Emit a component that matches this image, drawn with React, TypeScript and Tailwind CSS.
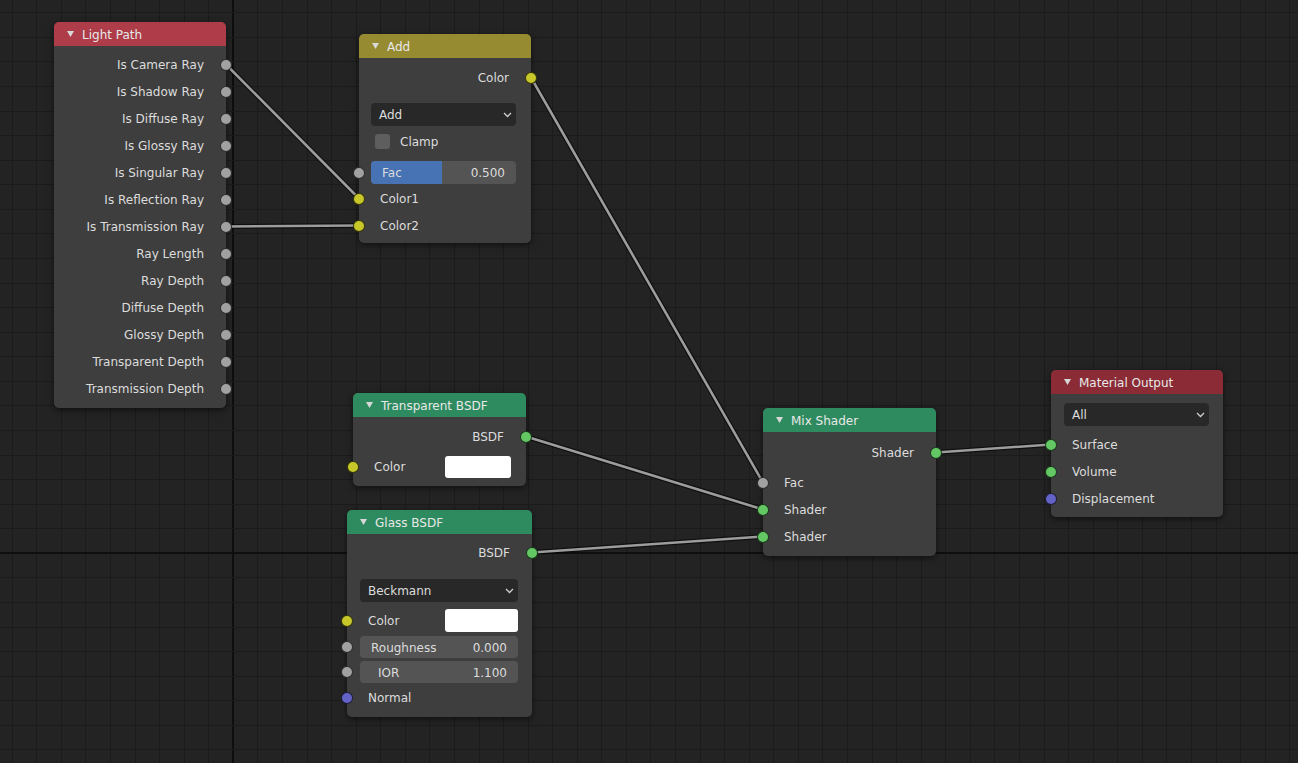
import React from "react";

const sock = {
  gray: "bg-[#a1a1a1]",
  yellow: "bg-[#c7c729]",
  green: "bg-[#63c763]",
  purple: "bg-[#6363c7]",
};
type S = keyof typeof sock;

function Socket({ c, side }: { c: S; side: "l" | "r" }) {
  return (
    <span
      className={`absolute top-1/2 -translate-y-1/2 w-[12px] h-[12px] rounded-full border border-black/70 ${sock[c]} ${
        side === "l" ? "-left-[6.5px]" : "-right-[6px]"
      }`}
    />
  );
}

function Node({ title, head, pos, children }: { title: string; head: string; pos: string; children: React.ReactNode }) {
  return (
    <div className={`absolute rounded-[5px] bg-[#3e3e3e] shadow-[0_2px_6px_rgba(0,0,0,0.55)] ${pos}`}>
      <div className={`h-[24px] rounded-t-[5px] flex items-center pl-[13px] gap-[8px] text-[#e8e8e8] ${head}`}>
        <svg width="7" height="6" viewBox="0 0 7 6">
          <polygon points="0,0 7,0 3.5,6" fill="#d8d8d8" />
        </svg>
        <span className="leading-none pt-[1px]">{title}</span>
      </div>
      {children}
    </div>
  );
}

function Out({ label, c }: { label: string; c: S }) {
  return (
    <div className="relative h-[27px] flex items-center justify-end pr-[22px] pt-[1px] leading-none">
      {label}
      <Socket c={c} side="r" />
    </div>
  );
}

function In({ label, c, cls = "" }: { label: string; c: S; cls?: string }) {
  return (
    <div className={`relative h-[27px] flex items-center pl-[21px] pt-[1px] leading-none ${cls}`}>
      {label}
      <Socket c={c} side="l" />
    </div>
  );
}

function Chevron() {
  return (
    <svg width="9" height="6" viewBox="0 0 9 6" className="mr-[4px]">
      <polyline points="1,1 4.5,4.5 8,1" fill="none" stroke="#cfcfcf" strokeWidth="1.3" />
    </svg>
  );
}

function Dropdown({ label, cls }: { label: string; cls: string }) {
  return (
    <div className={`h-[23px] rounded-[4px] bg-[#282828] flex items-center justify-between pl-[8px] leading-none ${cls}`}>
      <span className="pt-[1px]">{label}</span>
      <Chevron />
    </div>
  );
}

function Slider({ label, value, cls = "", lp = "pl-[11px]" }: { label: string; value: string; cls?: string; lp?: string }) {
  return (
    <div className={`relative h-[22px] ${cls}`}>
      <Socket c="gray" side="l" />
      <div className={`ml-[13px] mr-[14px] h-full rounded-[4px] bg-[#545454] flex items-center justify-between ${lp} pr-[11px] pt-[1px] leading-none`}>
        <span>{label}</span>
        <span>{value}</span>
      </div>
    </div>
  );
}

const lightPathOuts = [
  "Is Camera Ray",
  "Is Shadow Ray",
  "Is Diffuse Ray",
  "Is Glossy Ray",
  "Is Singular Ray",
  "Is Reflection Ray",
  "Is Transmission Ray",
  "Ray Length",
  "Ray Depth",
  "Diffuse Depth",
  "Glossy Depth",
  "Transparent Depth",
  "Transmission Depth",
];

const wires: [number, number, number, number][] = [
  [226, 64.5, 359, 198.5],
  [226, 226.5, 359, 225.5],
  [531, 77.5, 763, 482.5],
  [526, 436.5, 763, 509.5],
  [532, 552.5, 763, 536.5],
  [936, 452.5, 1051, 444.5],
];

function Canvas() {
  const step = 24.57;
  const xs = Array.from({ length: 56 }, (_, i) => 233.3 + (i - 10) * step);
  const ys = Array.from({ length: 34 }, (_, i) => 553.3 + (i - 23) * step);
  return (
    <svg className="absolute inset-0" width="1298" height="763">
      {xs.map((x, i) => (
        <line key={"x" + i} x1={x} y1={0} x2={x} y2={763} stroke={i === 10 ? "#0e0e0e" : "#1b1b1b"} strokeWidth={i === 10 ? 2 : 1} shapeRendering="crispEdges" />
      ))}
      {ys.map((y, i) => (
        <line key={"y" + i} x1={0} y1={y} x2={1298} y2={y} stroke={i === 23 ? "#0e0e0e" : "#1b1b1b"} strokeWidth={i === 23 ? 2 : 1} shapeRendering="crispEdges" />
      ))}
      {wires.map(([a, b, c, d], i) => (
        <g key={"w" + i}>
          <line x1={a} y1={b} x2={c} y2={d} stroke="rgba(0,0,0,0.55)" strokeWidth={5} strokeLinecap="round" />
          <line x1={a} y1={b} x2={c} y2={d} stroke="#9c9c9c" strokeWidth={2.6} strokeLinecap="round" />
        </g>
      ))}
    </svg>
  );
}

export default function App() {
  return (
    <div className="relative w-[1298px] h-[763px] overflow-hidden bg-[#232323] font-['DejaVu_Sans',sans-serif] text-[12px] text-[#dcdcdc]">
      <Canvas />

      {/* Light Path */}
      <Node title="Light Path" head="bg-[#ae3d49]" pos="left-[54px] top-[22px] w-[172px]">
        <div className="pt-[5px] pb-[6px]">
          {lightPathOuts.map(l => (
            <Out key={l} label={l} c="gray" />
          ))}
        </div>
      </Node>

      {/* Add */}
      <Node title="Add" head="bg-[#978b32]" pos="left-[359px] top-[34px] w-[172px]">
        <div className="pt-[6px] pb-[4px]">
          <Out label="Color" c="yellow" />
          <Dropdown label="Add" cls="mt-[12px] ml-[12px] mr-[15px]" />
          <div className="mt-[2px] h-[27px] flex items-center pl-[16px] gap-[10px] leading-none">
            <span className="w-[15px] h-[15px] rounded-[3px] bg-[#5e5e5e]" />
            <span className="pt-[1px]">Clamp</span>
          </div>
          <div className="relative mt-[6px] h-[23px]">
            <Socket c="gray" side="l" />
            <div className="relative ml-[12px] mr-[15px] h-full rounded-[4px] bg-[#545454] overflow-hidden flex items-center justify-between pl-[11px] pr-[11px] pt-[1px] leading-none">
              <span className="absolute left-0 top-0 bottom-0 w-[49%] bg-[#4772b3]" />
              <span className="relative">Fac</span>
              <span className="relative">0.500</span>
            </div>
          </div>
          <In label="Color1" c="yellow" cls="mt-[1px]" />
          <In label="Color2" c="yellow" />
        </div>
      </Node>

      {/* Transparent BSDF */}
      <Node title="Transparent BSDF" head="bg-[#2e8b5f]" pos="left-[353px] top-[393px] w-[173px]">
        <div className="pt-[6px] pb-[6px]">
          <Out label="BSDF" c="green" />
          <div className="relative mt-[3px] h-[27px] flex items-center justify-between pl-[21px] pr-[15px] leading-none">
            <span className="pt-[1px]">Color</span>
            <span className="w-[66px] h-[22px] rounded-[3px] bg-white" />
            <Socket c="yellow" side="l" />
          </div>
        </div>
      </Node>

      {/* Glass BSDF */}
      <Node title="Glass BSDF" head="bg-[#2e8b5f]" pos="left-[347px] top-[510px] w-[185px]">
        <div className="pt-[5px] pb-[6px]">
          <Out label="BSDF" c="green" />
          <Dropdown label="Beckmann" cls="mt-[13px] ml-[13px] mr-[14px]" />
          <div className="relative mt-[5px] h-[27px] flex items-center justify-between pl-[21px] pr-[14px] leading-none">
            <span className="pt-[1px]">Color</span>
            <span className="w-[73px] h-[23px] rounded-[3px] bg-white" />
            <Socket c="yellow" side="l" />
          </div>
          <Slider label="Roughness" value="0.000" cls="mt-[2px]" />
          <Slider label="IOR" value="1.100" cls="mt-[3px]" lp="pl-[18px]" />
          <In label="Normal" c="purple" cls="mt-[1px]" />
        </div>
      </Node>

      {/* Mix Shader */}
      <Node title="Mix Shader" head="bg-[#2e8b5f]" pos="left-[763px] top-[408px] w-[173px]">
        <div className="pt-[7px] pb-[6px]">
          <Out label="Shader" c="green" />
          <In label="Fac" c="gray" cls="mt-[3px]" />
          <In label="Shader" c="green" />
          <In label="Shader" c="green" />
        </div>
      </Node>

      {/* Material Output */}
      <Node title="Material Output" head="bg-[#8a2b35]" pos="left-[1051px] top-[370px] w-[172px]">
        <div className="pt-[9px] pb-[5px]">
          <Dropdown label="All" cls="ml-[13px] mr-[14px]" />
          <In label="Surface" c="green" cls="mt-[5px]" />
          <In label="Volume" c="green" />
          <In label="Displacement" c="purple" />
        </div>
      </Node>
    </div>
  );
}
